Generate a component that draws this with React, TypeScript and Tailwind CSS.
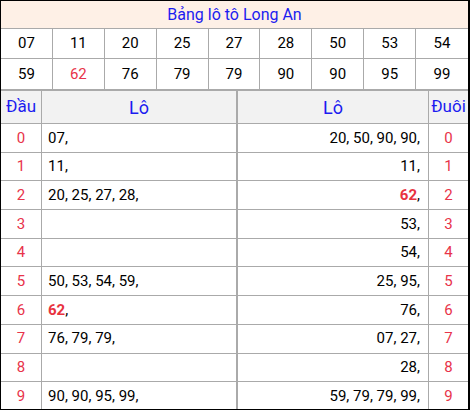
import React from "react";

const top1 = ["07", "11", "20", "25", "27", "28", "50", "53", "54"];
const top2 = ["59", "62", "76", "79", "79", "90", "90", "95", "99"];

type Item = { v: string; red?: boolean };
const dau: Item[][] = [
  [{ v: "07" }],
  [{ v: "11" }],
  [{ v: "20" }, { v: "25" }, { v: "27" }, { v: "28" }],
  [],
  [],
  [{ v: "50" }, { v: "53" }, { v: "54" }, { v: "59" }],
  [{ v: "62", red: true }],
  [{ v: "76" }, { v: "79" }, { v: "79" }],
  [],
  [{ v: "90" }, { v: "90" }, { v: "95" }, { v: "99" }],
];
const duoi: Item[][] = [
  [{ v: "20" }, { v: "50" }, { v: "90" }, { v: "90" }],
  [{ v: "11" }],
  [{ v: "62", red: true }],
  [{ v: "53" }],
  [{ v: "54" }],
  [{ v: "25" }, { v: "95" }],
  [{ v: "76" }],
  [{ v: "07" }, { v: "27" }],
  [{ v: "28" }],
  [{ v: "59" }, { v: "79" }, { v: "79" }, { v: "99" }],
];

function List({ items }: { items: Item[] }) {
  return (
    <>
      {items.map((it, i) => (
        <React.Fragment key={i}>
          {i > 0 ? " " : ""}
          {it.red ? <span className="font-bold text-[#e8333f]">{it.v}</span> : it.v},
        </React.Fragment>
      ))}
    </>
  );
}

export default function App() {
  return (
    <div
      className="w-[470px] h-[410px] bg-white text-[15px] text-black border-t border-l border-b border-r-2 border-black overflow-hidden"
      style={{ fontFamily: "Roboto, 'Noto Sans', sans-serif" }}
    >
      <div className="h-[28px] bg-[#fef0e6] flex items-center justify-center text-[#1c1cf0] text-[16px] border-b border-[#aaaaaa]">
        Bảng lô tô Long An
      </div>
      <div className="grid grid-cols-9 border-b-2 border-[#aaaaaa]">
        {[...top1, ...top2].map((n, i) => (
          <div
            key={i}
            className={`h-[30px] flex items-center justify-center ${i % 9 !== 8 ? "border-r border-[#aaaaaa]" : ""} ${i < 9 ? "border-b border-[#aaaaaa]" : ""} ${i === 10 ? "text-[#e8334a]" : ""}`}
          >
            {n}
          </div>
        ))}
      </div>
      <div className="grid grid-cols-[41px_194px_2px_190px_1px_1fr]">
        <div className="h-[33px] bg-[#f2f2f2] flex items-center justify-center text-[#1c1cf0] text-[17px] border-r border-[#aaaaaa] border-b">Đầu</div>
        <div className="h-[33px] bg-[#f2f2f2] flex items-center justify-center text-[#1c1cf0] text-[18px] border-b border-[#aaaaaa]">Lô</div>
        <div className="row-span-11 bg-[#aaaaaa]"></div>
        <div className="h-[33px] bg-[#f2f2f2] flex items-center justify-center text-[#1c1cf0] text-[18px] border-b border-[#aaaaaa]">Lô</div>
        <div className="row-span-11 bg-[#aaaaaa]"></div>
        <div className="h-[33px] bg-[#f2f2f2] flex items-center justify-center text-[#1c1cf0] text-[17px] border-b border-[#aaaaaa]">Đuôi</div>
        {dau.map((d, r) => (
          <React.Fragment key={r}>
            <div className={`h-[28.7px] flex items-center justify-center text-[#e8334a] border-r border-[#aaaaaa] ${r < 9 ? "border-b" : ""}`}>{r}</div>
            <div className={`h-[28.7px] flex items-center pl-[6px] border-[#aaaaaa] ${r < 9 ? "border-b" : ""}`}>
              <List items={d} />
            </div>
            <div className={`h-[28.7px] flex items-center justify-end pr-[8px] border-[#aaaaaa] ${r < 9 ? "border-b" : ""}`}>
              <List items={duoi[r]} />
            </div>
            <div className={`h-[28.7px] flex items-center justify-center text-[#e8334a] border-[#aaaaaa] ${r < 9 ? "border-b" : ""}`}>{r}</div>
          </React.Fragment>
        ))}
      </div>
    </div>
  );
}
